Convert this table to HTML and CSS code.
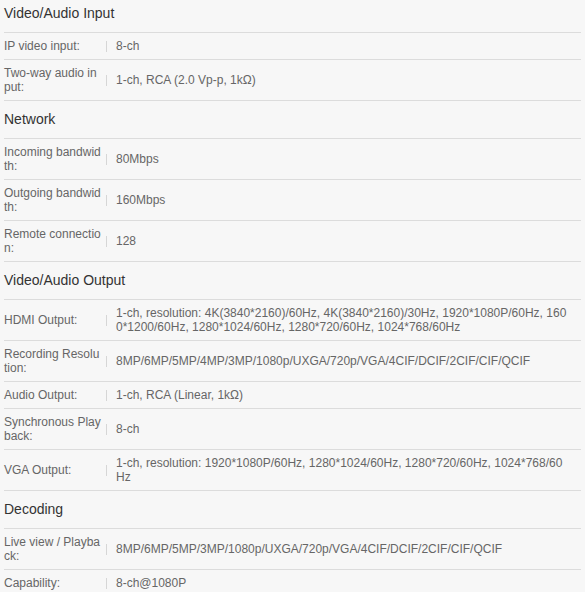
FILE: index.html
```html
<!DOCTYPE html>
<html>
<head>
<meta charset="utf-8">
<link rel="stylesheet" href="styles.css">
</head>
<body>
<div class="specs">
  <div class="group-title first">Video/Audio Input</div>
  <div class="row"><div class="label">IP video input:</div><span class="sep"></span><div class="value">8-ch</div></div>
  <div class="row"><div class="label">Two-way audio input:</div><span class="sep"></span><div class="value">1-ch, RCA (2.0 Vp-p, 1kΩ)</div></div>

  <div class="group-title">Network</div>
  <div class="row"><div class="label">Incoming bandwidth:</div><span class="sep"></span><div class="value">80Mbps</div></div>
  <div class="row"><div class="label">Outgoing bandwidth:</div><span class="sep"></span><div class="value">160Mbps</div></div>
  <div class="row"><div class="label">Remote connection:</div><span class="sep"></span><div class="value">128</div></div>

  <div class="group-title">Video/Audio Output</div>
  <div class="row"><div class="label">HDMI Output:</div><span class="sep"></span><div class="value">1-ch, resolution: 4K(3840*2160)/60Hz, 4K(3840*2160)/30Hz, 1920*1080P/60Hz, 1600*1200/60Hz, 1280*1024/60Hz, 1280*720/60Hz, 1024*768/60Hz</div></div>
  <div class="row"><div class="label">Recording Resolution:</div><span class="sep"></span><div class="value">8MP/6MP/5MP/4MP/3MP/1080p/UXGA/720p/VGA/4CIF/DCIF/2CIF/CIF/QCIF</div></div>
  <div class="row"><div class="label">Audio Output:</div><span class="sep"></span><div class="value">1-ch, RCA (Linear, 1kΩ)</div></div>
  <div class="row"><div class="label">Synchronous Playback:</div><span class="sep"></span><div class="value">8-ch</div></div>
  <div class="row"><div class="label">VGA Output:</div><span class="sep"></span><div class="value">1-ch, resolution: 1920*1080P/60Hz, 1280*1024/60Hz, 1280*720/60Hz, 1024*768/60Hz</div></div>

  <div class="group-title">Decoding</div>
  <div class="row"><div class="label">Live view / Playback:</div><span class="sep"></span><div class="value">8MP/6MP/5MP/3MP/1080p/UXGA/720p/VGA/4CIF/DCIF/2CIF/CIF/QCIF</div></div>
  <div class="row"><div class="label">Capability:</div><span class="sep"></span><div class="value">8-ch@1080P</div></div>
</div>
</body>
</html>
```

FILE: styles.css
```css
html, body {
  margin: 0;
  padding: 0;
  background: #f7f7f7;
}
body {
  font-family: "Liberation Sans", Arial, sans-serif;
  color: #666;
}
.specs {
  padding: 0 4px;
}
.group-title {
  font-size: 14px;
  line-height: 17px;
  color: #333;
  padding: 10px 0;
  border-bottom: 1px solid #dcdcdc;
}
.group-title.first {
  padding-top: 5px;
}
.row {
  display: flex;
  align-items: center;
  padding: 6px 0;
  border-bottom: 1px solid #dcdcdc;
  font-size: 12px;
  line-height: 14px;
}
.label {
  width: 98px;
  flex: none;
  word-break: break-all;
}
.sep {
  flex: none;
  width: 1px;
  height: 11px;
  background: #d6d6d6;
  margin: 0 9px 0 4px;
}
.value {
  flex: 1;
  min-width: 0;
  padding-right: 12px;
  word-break: break-all;
}
```
